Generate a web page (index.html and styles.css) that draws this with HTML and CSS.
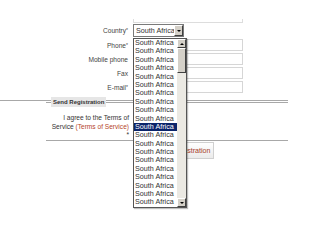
FILE: index.html
```html
<!DOCTYPE html>
<html lang="en">
<head>
	<meta charset="UTF-8">
	<title>Registration</title>
	<link rel="stylesheet" href="styles.css">
</head>
<body>
	<div class="page">
		<div class="top-box"></div>
		<div class="row row-country">
			<label class="lbl">Country<span class="req">*</span></label>
			<div class="select"><span class="sel-text">South Africa</span><span class="sel-btn"><i class="arr-down"></i></span></div>
		</div>
		<div class="row"><label class="lbl">Phone<span class="req">*</span></label><span class="input"></span></div>
		<div class="row"><label class="lbl">Mobile phone</label><span class="input"></span></div>
		<div class="row"><label class="lbl">Fax</label><span class="input"></span></div>
		<div class="row"><label class="lbl">E-mail<span class="req">*</span></label><span class="input"></span></div>
		<div class="sep"></div>
		<div class="fieldset">
			<div class="legend">Send Registration</div>
			<div class="agree">I agree to the Terms of Service <a href="javascript:;">(Terms of Service)</a><br>*</div>
		</div>
		<div class="actions"><button class="btn">Send Registration</button></div>

		<div class="dropdown">
			<ul class="options">
				<li>South Africa</li>
				<li>South Africa</li>
				<li>South Africa</li>
				<li>South Africa</li>
				<li>South Africa</li>
				<li>South Africa</li>
				<li>South Africa</li>
				<li>South Africa</li>
				<li>South Africa</li>
				<li>South Africa</li>
				<li class="on">South Africa</li>
				<li>South Africa</li>
				<li>South Africa</li>
				<li>South Africa</li>
				<li>South Africa</li>
				<li>South Africa</li>
				<li>South Africa</li>
				<li>South Africa</li>
				<li>South Africa</li>
				<li>South Africa</li>
			</ul>
			<div class="sb">
				<span class="sb-btn"><i class="arr-up"></i></span>
				<span class="sb-thumb"></span>
				<span class="sb-track"></span>
				<span class="sb-btn"><i class="arr-down"></i></span>
			</div>
		</div>
	</div>
</body>
</html>
```

FILE: styles.css
```css
*{padding:0; margin:0; list-style:none; box-sizing:border-box;}
html,body{height:100%;}
body{background:#fff; font-family:"Liberation Sans", Arial, sans-serif; font-size:6.6px; color:#444;}
.page{position:relative; width:288px; min-height:240px; padding-top:19px;}

.top-box{margin-left:133px; width:110px; height:4px; border:1px solid #ddd; border-top:none;}

.row{display:flex; align-items:center; height:14px;}
.row-country{height:15px;}
.lbl{width:133px; padding-right:5px; text-align:right; color:#444;}
.req{font-size:5px; vertical-align:top;}
.input{width:110px; height:12px; border:1px solid #d6d6d6; background:#fff;}

.select{display:flex; width:51px; height:13px; border:1px solid #7a7a7a; background:#fff;}
.sel-text{flex:1; font-size:7.2px; line-height:11px; padding-left:2px; color:#333; white-space:nowrap; overflow:hidden;}
.sel-btn{width:9px; height:11px; background:#d4d0c8; border:1px solid; border-color:#fff #404040 #404040 #fff; display:flex; align-items:center; justify-content:center;}

.arr-down{display:block; width:0; height:0; border-left:2px solid transparent; border-right:2px solid transparent; border-top:2px solid #000;}
.arr-up{display:block; width:0; height:0; border-left:2px solid transparent; border-right:2px solid transparent; border-bottom:2px solid #000;}

.sep{height:1px; margin-top:6px; background:#a8a8a8;}
.fieldset{margin:1px 0 0 46px; border-top:1px solid #a8a8a8; border-bottom:1px solid #a8a8a8; height:39px;}
.legend{display:table; margin:-6px 0 0 5px; padding:0 2px; height:10px; line-height:10px; background:#e6e6e6; color:#333; font-weight:bold; font-size:6px;}
.agree{width:83px; margin-top:7px; text-align:right; line-height:8.5px; color:#333;}
.agree a{color:#b5452a; text-decoration:none;}

.actions{padding:1px 0 0 150px;}
.btn{height:17px; padding:0 3px; font-family:"Liberation Sans", Arial, sans-serif; font-size:7.1px; color:#a5402a; border:1px solid #d0d0d0; background:linear-gradient(#fff, #ebebeb);}

.dropdown{position:absolute; left:133px; top:38px; width:54px; height:170px; border:1px solid #555; background:#fff; display:flex; box-shadow:1px 1px 1px rgba(0,0,0,.25);}
.options{flex:1;}
.options li{height:8.4px; line-height:8.4px; padding-left:1px; font-size:7.2px; color:#333; white-space:nowrap; overflow:hidden;}
.options li.on{background:#0a246a; color:#fff;}
.sb{width:9px; display:flex; flex-direction:column; background:#ebe9e3;}
.sb-btn{height:9px; background:#d4d0c8; border:1px solid; border-color:#fff #404040 #404040 #fff; display:flex; align-items:center; justify-content:center;}
.sb-thumb{height:25px; background:#d4d0c8; border:1px solid; border-color:#fff #404040 #404040 #fff;}
.sb-track{flex:1;}
```
